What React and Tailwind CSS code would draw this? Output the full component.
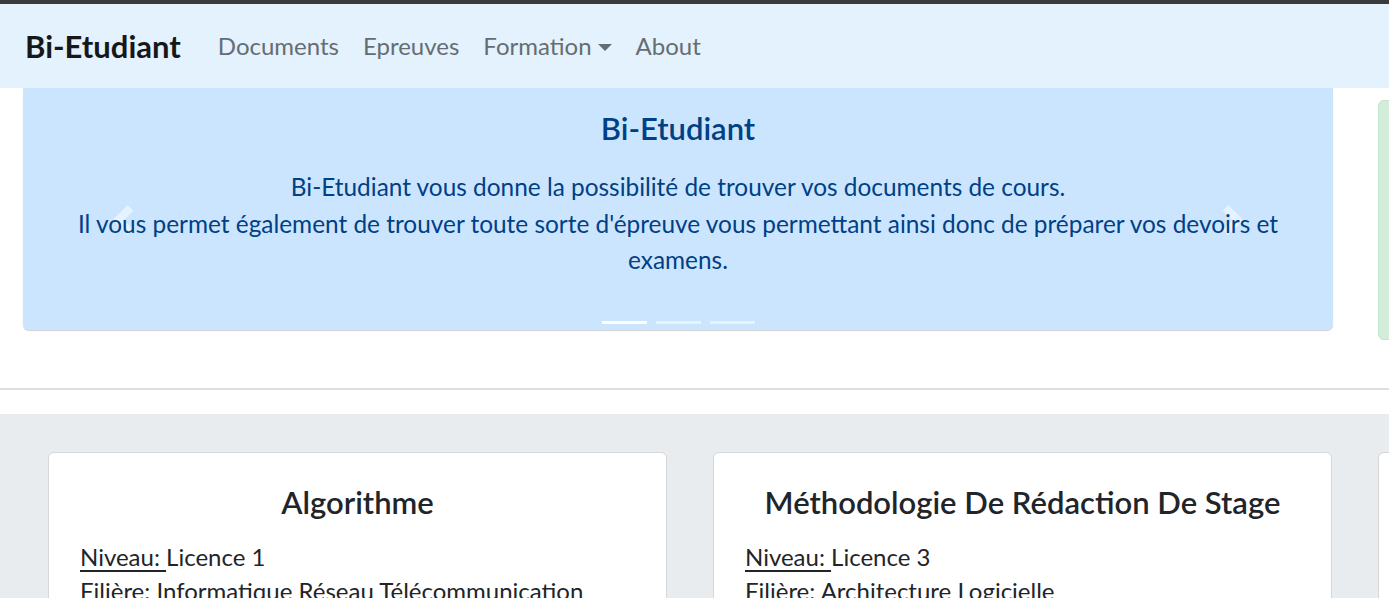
import React from 'react';

const font = { fontFamily: 'Lato, "Noto Sans", sans-serif' };

const cours = [
    { titre: 'Algorithme', niveau: 'Licence 1', filiere: 'Informatique Réseau Télécommunication' },
    { titre: 'Méthodologie De Rédaction De Stage', niveau: 'Licence 3', filiere: 'Architecture Logicielle' },
    { titre: 'Base De Données', niveau: 'Licence 2', filiere: 'Informatique Réseau Télécommunication' },
];

// chevron of the bootstrap 4 carousel controls
const Chevron = ({ flip }) => (
    <svg viewBox="0 0 8 8" className={`w-[30px] h-[30px] ${flip ? 'rotate-180' : ''}`} fill="#fff">
        <path d="M5.25 0l-4 4 4 4 1.5-1.5L4.25 4l2.5-2.5L5.25 0z" />
    </svg>
);

const Navbar = () => (
    <nav className="h-[84px] bg-[#e3f2fd] flex items-center pl-[25px]">
        <span className="text-[31px] font-bold text-[#171819] mr-[25px] leading-none">Bi-Etudiant</span>
        <ul className="flex items-center text-[24px] text-[#666d72]">
            <li className="px-[12px]">Documents</li>
            <li className="px-[12px]">Epreuves</li>
            <li className="px-[12px] flex items-center">
                Formation
                <span className="ml-[6px] mt-[2px] border-t-[7px] border-t-[#666d72] border-x-[7px] border-x-transparent" />
            </li>
            <li className="px-[12px]">About</li>
        </ul>
    </nav>
);

const Carousel = () => (
    <section className="flex items-start gap-[45px] pl-[23px] h-[252px]">
        <div className="relative shrink-0 w-[1310px] h-[242px] bg-[#cce5ff] rounded-b-[6px] shadow-[0_1px_1px_rgba(0,0,0,0.18)] text-[#004085] text-center">
            <div className="absolute left-[85px] top-[117px] opacity-50"><Chevron /></div>
            <div className="absolute right-[85px] top-[117px] opacity-50"><Chevron flip /></div>
            <div className="relative px-[20px] pt-[22px]">
                <h5 className="text-[31px] font-semibold leading-[36px]">Bi-Etudiant</h5>
                <p className="mt-[23px] text-[24.4px] leading-[36.5px]">
                    Bi-Etudiant vous donne la possibilité de trouver vos documents de cours.<br />
                    Il vous permet également de trouver toute sorte d'épreuve vous permettant ainsi donc de préparer vos devoirs et examens.
                </p>
            </div>
            <div className="absolute bottom-[6px] left-0 right-0 flex justify-center gap-[9px]">
                <span className="w-[45px] h-[3px] bg-white" />
                <span className="w-[45px] h-[3px] bg-white opacity-50" />
                <span className="w-[45px] h-[3px] bg-white opacity-50" />
            </div>
        </div>
        <div className="shrink-0 w-[1310px] h-[240px] mt-[12px] bg-[#d4edda] border border-[#c3e6cb] rounded-[6px]" />
    </section>
);

const Carte = ({ titre, niveau, filiere }) => (
    <div className="shrink-0 w-[619px] h-[200px] bg-white border border-[#d5d7d9] rounded-[6px] px-[31px] pt-[31px] text-[#212529]">
        <h5 className="text-center text-[31px] font-semibold leading-[36px]">{titre}</h5>
        <p className="mt-[20px] text-[24px] leading-[34px]">
            <span className="underline underline-offset-[4px]">Niveau: </span>{niveau}
        </p>
        <p className="text-[24px] leading-[34px]">Filière: {filiere}</p>
    </div>
);

export default function App() {
    return (
        <div className="h-[598px] w-[1389px] overflow-hidden bg-white" style={font}>
            <div className="h-[4px] bg-[#3a3a3a]" />
            <Navbar />
            <Carousel />
            <div className="mt-[48px] h-[2px] bg-[#dedede]" />
            <section className="mt-[24px] bg-[#e9ecef] pt-[38px] pl-[48px] flex gap-[46px] h-[200px]">
                {cours.map(c => <Carte key={c.titre} {...c} />)}
            </section>
        </div>
    );
}
